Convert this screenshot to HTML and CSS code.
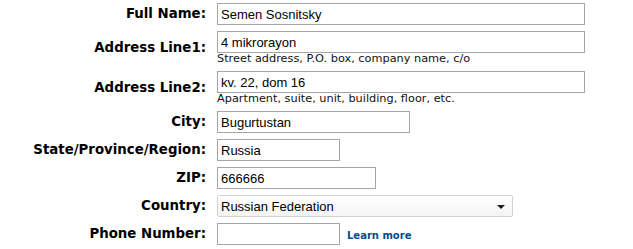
FILE: index.html
```html
<!DOCTYPE html>
<html lang="en">
<head>
    <meta charset="UTF-8">
    <title>Shipping Address</title>
    <link rel="stylesheet" href="styles.css">
</head>
<body>
    <form class="address-form">
        <label class="label" for="fullName">Full Name:</label>
        <div class="field">
            <input class="text wide" id="fullName" type="text" value="Semen Sosnitsky">
        </div>

        <label class="label" for="addr1">Address Line1:</label>
        <div class="field">
            <input class="text wide" id="addr1" type="text" value="4 mikrorayon">
            <div class="hint">Street address, P.O. box, company name, c/o</div>
        </div>

        <label class="label" for="addr2">Address Line2:</label>
        <div class="field">
            <input class="text wide" id="addr2" type="text" value="kv. 22, dom 16">
            <div class="hint">Apartment, suite, unit, building, floor, etc.</div>
        </div>

        <label class="label" for="city">City:</label>
        <div class="field">
            <input class="text city" id="city" type="text" value="Bugurtustan">
        </div>

        <label class="label" for="state">State/Province/Region:</label>
        <div class="field">
            <input class="text short" id="state" type="text" value="Russia">
        </div>

        <label class="label" for="zip">ZIP:</label>
        <div class="field">
            <input class="text zip" id="zip" type="text" value="666666">
        </div>

        <label class="label" for="country">Country:</label>
        <div class="field">
            <span class="select-wrap">
                <select class="select" id="country">
                    <option>Russian Federation</option>
                </select>
            </span>
        </div>

        <label class="label" for="phone">Phone Number:</label>
        <div class="field inline">
            <input class="text short" id="phone" type="text" value="">
            <a class="learn" href="#">Learn more</a>
        </div>
    </form>
</body>
</html>
```

FILE: styles.css
```css
body {
    margin: 0;
    background: #fff;
    color: #000;
    font-family: Verdana, "DejaVu Sans", sans-serif;
}

.address-form {
    display: grid;
    grid-template-columns: 206px 1fr;
    column-gap: 11px;
    row-gap: 6px;
    padding-top: 3px;
}

.label {
    align-self: center;
    text-align: right;
    font-weight: bold;
    font-size: 13.33px;
    line-height: 16px;
    white-space: nowrap;
}

.field {
    display: flex;
    flex-direction: column;
    align-items: flex-start;
}

.field.inline {
    flex-direction: row;
    align-items: center;
}

.text {
    box-sizing: border-box;
    height: 22px;
    margin: 0;
    padding: 1px 3px 0;
    border: 1px solid #a5a5a5;
    font-family: Arial, "Liberation Sans", sans-serif;
    font-size: 13px;
    color: #000;
    background: #fff;
    outline: none;
}

.wide { width: 368px; }
.city { width: 193px; }
.short { width: 123px; }
.zip { width: 159px; }

.hint {
    font-size: 11.3px;
    line-height: 12px;
    margin-top: 0;
    color: #111;
}

.select-wrap {
    position: relative;
    display: block;
    height: 22px;
}

.select {
    box-sizing: border-box;
    display: block;
    width: 296px;
    height: 22px;
    margin: 0;
    padding: 0 3px;
    border: 1px solid #d2d2d2;
    border-radius: 2px;
    background: linear-gradient(#ffffff, #f4f4f4);
    font-family: Arial, "Liberation Sans", sans-serif;
    font-size: 13px;
    color: #000;
    appearance: none;
    -webkit-appearance: none;
}

.select-wrap::after {
    content: "";
    position: absolute;
    right: 8px;
    top: 10px;
    border-left: 4px solid transparent;
    border-right: 4px solid transparent;
    border-top: 4px solid #1a1a1a;
    pointer-events: none;
}

.learn {
    margin-left: 7px;
    margin-top: 2px;
    font-size: 10px;
    font-weight: bold;
    color: #004b91;
    text-decoration: none;
}
```
